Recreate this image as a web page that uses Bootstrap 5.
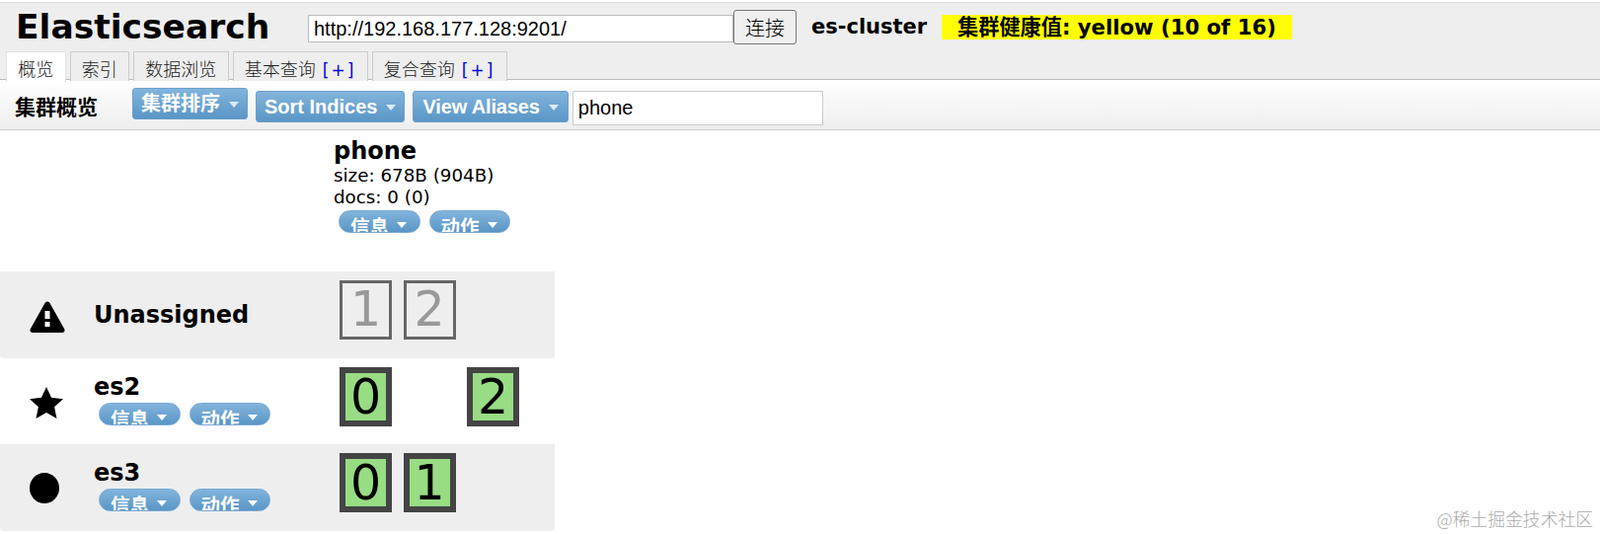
<!DOCTYPE html>
<html lang="en">
<head>
  <meta charset="UTF-8">
  <title>Elasticsearch Head</title>
  <link href="https://cdn.jsdelivr.net/npm/bootstrap@5.3.0/dist/css/bootstrap.min.css" rel="stylesheet">
  <style>
    body { background: #fff; color: #000; font-family: "DejaVu Sans", "Noto Sans CJK SC", sans-serif; overflow: hidden; }
    .es-head { background: #eee; margin-top: 2px; border-top: 1px solid #ddd; height: 79px; border-bottom: 1px solid #bbb; }
    .es-toprow { height: 49px; }
    .es-title { font-size: 34.5px; font-weight: 700; line-height: 1; margin: 0 0 0 16px; width: 296px; flex: none; }
    .es-uri { width: 431px; height: 28px; flex: none; margin-top: 3px; padding: 0 5px; border: 1px solid #bbb; border-radius: 0; font: 20px/26px "Liberation Sans", sans-serif; color: #000; }
    .es-connect { width: 64px; height: 35px; flex: none; padding: 0; background: #efefef; border: 1px solid #767676; border-radius: 3px; color: #000; font: 300 20px "Noto Sans CJK SC", sans-serif; }
    .es-cluster { font-size: 21px; font-weight: 700; margin-left: 15px; width: 132px; flex: none; }
    .es-health { background: #ff0; font-size: 21.2px; font-weight: 700; height: 25px; line-height: 25px; width: 355px; padding-left: 16px; white-space: nowrap; flex: none; }
    .es-tabs { border: 0; gap: 4px; margin-left: 6px; height: 30px; flex-wrap: nowrap; }
    .es-tabs .nav-link { height: 30px; margin: 0; padding: 0 11.25px; border: 1px solid #ccc; border-bottom: 0; border-radius: 0; background: #eee; color: #222; font: 300 18px/32px "Noto Sans CJK SC", sans-serif; white-space: nowrap; }
    .es-tabs .nav-link.active { background: #fff; color: #222; height: 31px; }
    .es-plus { color: #00e; margin-left: 7px; letter-spacing: 2px; font-family: "DejaVu Sans", sans-serif; font-size: 17px; font-weight: 400; }
    .es-toolbar { height: 51px; padding: 11px 0 0 15px; background: linear-gradient(#fff, #eee); border-bottom: 1px solid #ccc; }
    .es-toolbar h2 { font: 700 21px/30px "Noto Sans CJK SC", sans-serif; margin: 0 28px 0 0; width: 83px; flex: none; white-space: nowrap; }
    .es-btn { height: 32px; padding: 0 8px; border: 1px solid #6b9fca; border-radius: 3px; background: linear-gradient(#82b4dc, #5a96c6); color: #fff; font: 700 20px/28px "Liberation Sans", "Noto Sans CJK SC", sans-serif; white-space: nowrap; flex: none; }
    .es-btn:hover { background: #5a96c6; color: #fff; }
    .es-btn::after { margin-left: 9px; vertical-align: 3px; border-top: 6px solid #dfeaf5; border-right: 5px solid transparent; border-left: 5px solid transparent; border-bottom: 0; }
    .es-raise { margin-top: -3px; }
    .es-tight { padding: 0 9px; letter-spacing: -0.15px; }
    .es-filter { width: 254px; height: 35px; flex: none; margin-left: -4px; padding: 0 5px; border: 1px solid #ccc; border-radius: 0; font: 20px/33px "Liberation Sans", sans-serif; color: #000; }
    .es-index { height: 143px; padding: 9px 0 0 338px; }
    .es-index h3 { font-size: 24px; font-weight: 700; line-height: 24px; margin: 0 0 2px; }
    .es-index p { font-size: 18.3px; line-height: 22px; margin: 0; white-space: nowrap; }
    .es-pills { gap: 9px; }
    .es-index .es-pills { margin: 2px 0 0 5px; }
    .es-pill { width: 82.5px; height: 23px; padding: 2px 0 0 11px; border: 1px solid #7aa9d4; border-radius: 12px; background: linear-gradient(#82b4dc, #5a96c6); color: #fff; font: 700 19.5px/26px "Noto Sans CJK SC", sans-serif; overflow: hidden; white-space: nowrap; text-align: left; }
    .es-pill:hover { background: #5a96c6; color: #fff; }
    .es-pill::after { margin-left: 8px; vertical-align: 6px; border-top: 6px solid #fff; border-right: 5px solid transparent; border-left: 5px solid transparent; border-bottom: 0; }
    .es-node { width: 562px; height: 87.5px; padding-top: 9px; border-radius: 0 0 3px 3px; }
    .es-shade { background: #eee; }
    .es-icon { width: 95px; padding: 20px 0 0 30px; flex: none; }
    .es-name { width: 249px; flex: none; padding-top: 6px; }
    .es-name h4 { font-size: 24px; font-weight: 700; line-height: 28px; margin: 0; }
    .es-name .es-pills { margin: 2px 0 0 5px; }
    .es-single { padding: 0 0 9px; }
    .es-shards { display: grid; grid-template-columns: repeat(3, 53px); column-gap: 11.5px; align-items: start; }
    .es-shard { height: 60px; border: 6px solid #444; background: #98dc84; font-size: 49px; line-height: 50px; text-align: center; overflow: hidden; }
    .es-idle { border: 3px solid #666; background: transparent; color: #999; line-height: 54px; }
    .es-mark { position: absolute; right: 7px; bottom: 6px; color: #aaa; font: 300 17.8px/20px "Noto Sans CJK SC", sans-serif; }
  </style>
</head>
<body>
  <header class="es-head">
    <div class="es-toprow d-flex align-items-center">
      <h1 class="es-title">Elasticsearch</h1>
      <input class="form-control es-uri" type="text" value="http://192.168.177.128:9201/">
      <button class="btn es-connect" type="button">连接</button>
      <span class="es-cluster">es-cluster</span>
      <span class="es-health">集群健康值: yellow (10 of 16)</span>
    </div>
    <ul class="nav nav-tabs es-tabs">
      <li class="nav-item"><a class="nav-link active" href="#">概览</a></li>
      <li class="nav-item"><a class="nav-link" href="#">索引</a></li>
      <li class="nav-item"><a class="nav-link" href="#">数据浏览</a></li>
      <li class="nav-item"><a class="nav-link" href="#">基本查询<span class="es-plus">[+]</span></a></li>
      <li class="nav-item"><a class="nav-link" href="#">复合查询<span class="es-plus">[+]</span></a></li>
    </ul>
  </header>

  <div class="es-toolbar d-flex align-items-start gap-2">
    <h2>集群概览</h2>
    <button class="btn es-btn dropdown-toggle es-raise" type="button">集群排序</button>
    <button class="btn es-btn dropdown-toggle" type="button">Sort Indices</button>
    <button class="btn es-btn dropdown-toggle es-tight" type="button">View Aliases</button>
    <input class="form-control es-filter" type="text" value="phone">
  </div>

  <section class="es-index">
    <h3>phone</h3>
    <p>size: 678B (904B)</p>
    <p>docs: 0 (0)</p>
    <div class="es-pills d-flex">
      <button class="btn es-pill dropdown-toggle" type="button">信息</button>
      <button class="btn es-pill dropdown-toggle" type="button">动作</button>
    </div>
  </section>

  <div class="es-node es-shade d-flex">
    <div class="es-icon">
      <svg width="36" height="34" viewBox="0 0 36 34"><path d="M18 1.500c1.200 0 2 .7 2.600 1.800l14.600 26c.9 1.700-.1 3.700-2.200 3.700H3C.9 33-.1 31 .8 29.300l14.600-26C16 2.200 16.800 1.500 18 1.500z"/><rect x="15.500" y="11" width="5" height="8" fill="#fff"/><rect x="15.500" y="22" width="5" height="5" fill="#fff"/></svg>
    </div>
    <div class="es-name es-single d-flex align-items-center"><h4>Unassigned</h4></div>
    <div class="es-shards">
      <div class="es-shard es-idle">1</div>
      <div class="es-shard es-idle">2</div>
    </div>
  </div>

  <div class="es-node d-flex">
    <div class="es-icon">
      <svg width="34" height="32" viewBox="0 0 34 32"><path d="M17 0l5 10.800 12 1.400-8.900 8 2.400 11.800L17 26.100 6.500 32l2.400-11.800L0 12.200l12-1.400z"/></svg>
    </div>
    <div class="es-name">
      <h4>es2</h4>
      <div class="es-pills d-flex">
        <button class="btn es-pill dropdown-toggle" type="button">信息</button>
        <button class="btn es-pill dropdown-toggle" type="button">动作</button>
      </div>
    </div>
    <div class="es-shards">
      <div class="es-shard">0</div>
      <div></div>
      <div class="es-shard">2</div>
    </div>
  </div>

  <div class="es-node es-shade d-flex">
    <div class="es-icon">
      <svg width="30" height="31" viewBox="0 0 30 31"><ellipse cx="15" cy="15.500" rx="15" ry="15.500"/></svg>
    </div>
    <div class="es-name">
      <h4>es3</h4>
      <div class="es-pills d-flex">
        <button class="btn es-pill dropdown-toggle" type="button">信息</button>
        <button class="btn es-pill dropdown-toggle" type="button">动作</button>
      </div>
    </div>
    <div class="es-shards">
      <div class="es-shard">0</div>
      <div class="es-shard">1</div>
    </div>
  </div>

  <div class="es-mark">@稀土掘金技术社区</div>
</body>
</html>
